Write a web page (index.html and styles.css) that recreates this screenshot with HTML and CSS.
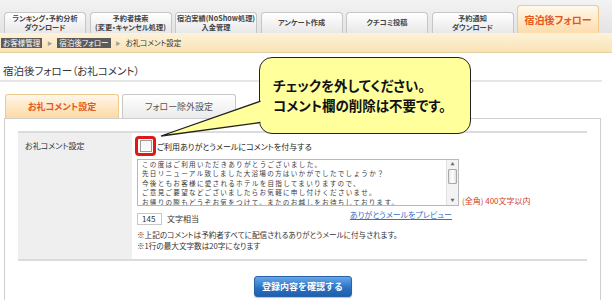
FILE: index.html
```html
<!DOCTYPE html>
<html lang="ja">
<head>
  <meta charset="UTF-8">
  <title>宿泊後フォロー（お礼コメント）</title>
  <link rel="stylesheet" href="styles.css">
</head>
<body>
  <div class="page">
    <ul class="menu">
      <li class="menu-tab">ランキング・予約分析<br>ダウンロード</li>
      <li class="menu-tab">予約者検索<br>(変更・キャンセル処理)</li>
      <li class="menu-tab">宿泊実績(NoShow処理)<br>入金管理</li>
      <li class="menu-tab">アンケート作成</li>
      <li class="menu-tab">クチコミ投稿</li>
      <li class="menu-tab">予約通知<br>ダウンロード</li>
      <li class="menu-tab active">宿泊後フォロー</li>
    </ul>

    <div class="crumbs">
      <span class="crumb">お客様管理</span><span class="sep">▶</span>
      <span class="crumb">宿泊後フォロー</span><span class="sep">▶</span>
      <span class="here">お礼コメント設定</span>
    </div>

    <h1 class="title">宿泊後フォロー（お礼コメント）</h1>

    <div class="subtabs">
      <div class="subtab active">お礼コメント設定</div>
      <div class="subtab">フォロー除外設定</div>
    </div>

    <div class="panel">
      <table class="form">
        <tr>
          <th>お礼コメント設定</th>
          <td>
            <div class="check">
              <span class="mark"><span class="box"></span></span>
              <span>ご利用ありがとうメールにコメントを付与する</span>
            </div>
            <div class="comment-row">
              <div class="comment">
                <div class="comment-text">
                  この度はご利用いただきありがとうございました。<br>
                  先日リニューアル致しました大浴場の方はいかがでしたでしょうか？<br>
                  今後ともお客様に愛されるホテルを目指してまいりますので、<br>
                  ご意見ご要望などございましたらお気軽に申し付けくださいませ。<br>
                  お帰りの際もどうぞお気をつけて。またのお越しをお待ちしております。
                </div>
                <div class="scrollbar">
                  <span class="arrow">▲</span>
                  <span class="thumb"></span>
                  <span class="track"></span>
                  <span class="arrow">▼</span>
                </div>
              </div>
              <span class="limit">(全角) 400文字以内</span>
            </div>
            <div class="count-row">
              <span class="count">145</span>
              <span class="count-label">文字相当</span>
              <a class="preview" href="#">ありがとうメールをプレビュー</a>
            </div>
            <p class="note">
              ※上記のコメントは予約者すべてに配信されるありがとうメールに付与されます。<br>
              ※1行の最大文字数は20字になります
            </p>
          </td>
        </tr>
      </table>
      <div class="actions">
        <button class="submit" type="button">登録内容を確認する</button>
      </div>
    </div>

    <!-- 吹き出し -->
    <div class="callout">
      チェックを外してください。<br>
      コメント欄の削除は不要です。
    </div>
    <svg class="callout-tail" width="120" height="50" viewBox="0 0 120 50">
      <polygon points="114,5 11,41 114,28" fill="#ffff9c"/>
      <path d="M110.5 6.2 L11 41 L110.5 27.5" fill="none" stroke="#222" stroke-width="1.3"/>
    </svg>
  </div>
</body>
</html>
```

FILE: styles.css
```css
body {
  margin: 0;
  background: #fff;
  color: #333;
  font-family: "Noto Sans CJK JP", sans-serif;
  font-size: 8px;
  font-feature-settings: "palt";
}
.page {
  position: relative;
  width: 612px;
  height: 300px;
  overflow: hidden;
}

/* グローバルメニュー */
.menu {
  display: flex;
  align-items: flex-end;
  gap: 3.5px;
  height: 33px;
  margin: 0;
  padding: 0 0 0 4px;
  list-style: none;
  background: linear-gradient(#f3f3f3, #e3e3e3);
}
.menu-tab {
  box-sizing: border-box;
  width: 82px;
  height: 21px;
  display: flex;
  align-items: center;
  justify-content: center;
  text-align: center;
  white-space: nowrap;
  border: 1px solid #c6c6c6;
  border-bottom: none;
  border-radius: 4px 4px 0 0;
  background: linear-gradient(#fff, #e8e8e8);
  color: #444;
  font-size: 7.2px;
  font-weight: bold;
  line-height: 9.5px;
}
.menu-tab.active {
  height: 28px;
  border-color: #efc98e;
  background: linear-gradient(#fff8ec, #fddcaa);
  color: #e4571c;
  font-size: 10px;
}

/* パンくず */
.crumbs {
  display: flex;
  align-items: center;
  height: 19px;
  padding-left: 1px;
  background: linear-gradient(#fdf2d9, #f9e3b5);
  border-bottom: 1px solid #e3cfa2;
  font-size: 7.5px;
}
.crumb {
  padding: 0 2px;
  background: #5b5b5b;
  color: #fff;
  line-height: 10px;
}
.sep {
  margin: 0 5px;
  color: #a99;
  font-size: 5px;
}
.here {
  color: #333;
}

.title {
  width: 599px;
  margin: 11px 0 0;
  padding: 0 0 2px 3px;
  border-bottom: 2px solid #e6e6e6;
  font-size: 10.5px;
  font-weight: normal;
  line-height: 14px;
}

/* サブタブ */
.subtabs {
  display: flex;
  gap: 3px;
  margin-top: 12px;
  padding-left: 5px;
}
.subtab {
  box-sizing: border-box;
  width: 114px;
  height: 24px;
  display: flex;
  align-items: center;
  justify-content: center;
  border: 1px solid #c8c8c8;
  border-bottom: none;
  border-radius: 3px 3px 0 0;
  background: linear-gradient(#fff, #ebebeb);
  color: #555;
  font-size: 9px;
}
.subtab.active {
  border-color: #f0c98f;
  background: linear-gradient(#fff6e8, #fdd9a5);
  color: #e25a1c;
  font-weight: bold;
}

.panel {
  box-sizing: border-box;
  width: 597px;
  height: 200px;
  margin-left: 4px;
  padding: 12px 13px 0;
  border: 1px solid #cfcfcf;
  border-bottom: none;
}

/* 設定フォーム */
.form {
  width: 100%;
  border-collapse: collapse;
  border-top: 2px solid #dcdcdc;
  border-bottom: 2px solid #dcdcdc;
}
.form th {
  box-sizing: border-box;
  width: 114px;
  padding: 7px 7px;
  background: #efefef;
  text-align: left;
  vertical-align: top;
  font-weight: normal;
}
.form td {
  padding: 3px 0 8px 3px;
  vertical-align: top;
}
.check {
  display: flex;
  align-items: center;
  height: 20px;
  color: #222;
}
.mark {
  box-sizing: border-box;
  width: 21px;
  height: 20px;
  display: flex;
  align-items: center;
  justify-content: center;
  border: 3px solid #e01818;
  border-radius: 4px;
  margin-right: 1px;
}
.box {
  width: 10px;
  height: 10px;
  border: 1px solid #9c9c9c;
  background: linear-gradient(#f4f4f4, #fff);
}

.comment-row {
  display: flex;
  align-items: flex-end;
  margin: 3px 0 0 2px;
}
.comment {
  box-sizing: border-box;
  display: flex;
  width: 322px;
  height: 47px;
  border: 1px solid #b8b8b8;
}
.comment-text {
  flex: 1;
  overflow: hidden;
  padding: 0 4px;
  color: #3a3a3a;
  font-size: 6.6px;
  font-feature-settings: normal;
  letter-spacing: 1.25px;
  line-height: 9.4px;
  white-space: nowrap;
}
.scrollbar {
  display: flex;
  flex-direction: column;
  width: 11px;
  border-left: 1px solid #e2e2e2;
  background: #f3f3f3;
}
.arrow {
  height: 9px;
  color: #666;
  font-size: 4px;
  line-height: 9px;
  text-align: center;
}
.thumb {
  height: 13px;
  margin: 0 1px;
  border: 1px solid #a9a9a9;
  border-radius: 1px;
  background: linear-gradient(90deg, #e6e6e6, #fff, #e0e0e0);
}
.track {
  flex: 1;
}
.limit {
  margin-left: 3px;
  color: #d2401a;
  line-height: 10px;
}

.count-row {
  display: flex;
  align-items: flex-start;
  width: 322px;
  margin: 4px 0 0 2px;
}
.count {
  box-sizing: border-box;
  width: 25px;
  height: 12px;
  margin-top: 3px;
  padding-left: 4px;
  border: 1px solid #c8c8c8;
  line-height: 10px;
}
.count-label {
  margin: 3px 0 0 5px;
  line-height: 12px;
}
.preview {
  margin: 0 7px 0 auto;
  color: #3a6fc4;
  line-height: 10px;
}
.note {
  margin: 5px 0 0 2px;
  font-size: 7.6px;
  line-height: 10.5px;
}

.actions {
  padding-top: 15px;
  text-align: center;
}
.submit {
  width: 98px;
  height: 21px;
  border: 1px solid #2b61a6;
  border-radius: 3px;
  background: linear-gradient(#63a8ea, #2a6fc1 60%, #1f5fae);
  box-shadow: 0 1px 1px rgba(0,0,0,0.25);
  color: #fff;
  font-family: inherit;
  font-size: 9px;
  font-weight: bold;
}

/* 吹き出し */
.callout {
  position: absolute;
  left: 259px;
  top: 57px;
  box-sizing: border-box;
  width: 212px;
  height: 77px;
  padding: 17px 0 0 13px;
  border: 1.5px solid #222;
  border-radius: 13px;
  background: #ffff9c;
  color: #111;
  font-size: 13.5px;
  font-weight: bold;
  line-height: 20px;
}
.callout-tail {
  position: absolute;
  left: 150px;
  top: 95px;
}
```
